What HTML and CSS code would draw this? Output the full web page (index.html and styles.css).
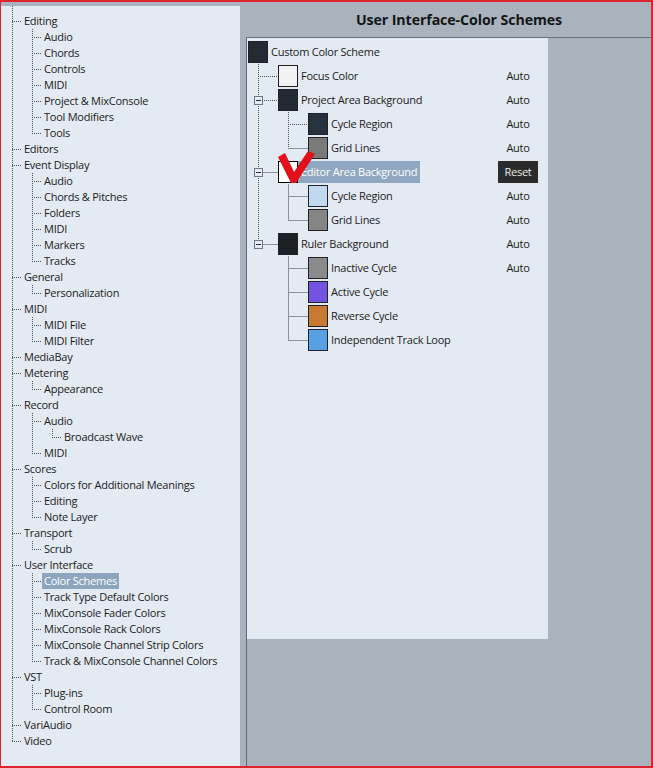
FILE: index.html
```html
<!DOCTYPE html>
<html>
<head>
<meta charset="utf-8">
<link rel="stylesheet" href="styles.css">
</head>
<body>
<div class="frame">
  <div class="left">
    <div class="ltree">
      <div class="lr"><span class="g h"></span><span class="lt">Editing</span></div>
      <div class="lr"><span class="g"></span><span class="g tee"></span><span class="lt">Audio</span></div>
      <div class="lr"><span class="g"></span><span class="g tee"></span><span class="lt">Chords</span></div>
      <div class="lr"><span class="g"></span><span class="g tee"></span><span class="lt">Controls</span></div>
      <div class="lr"><span class="g"></span><span class="g tee"></span><span class="lt">MIDI</span></div>
      <div class="lr"><span class="g"></span><span class="g tee"></span><span class="lt">Project &amp; MixConsole</span></div>
      <div class="lr"><span class="g"></span><span class="g tee"></span><span class="lt">Tool Modifiers</span></div>
      <div class="lr"><span class="g"></span><span class="g ell"></span><span class="lt">Tools</span></div>
      <div class="lr"><span class="g h"></span><span class="lt">Editors</span></div>
      <div class="lr"><span class="g h"></span><span class="lt">Event Display</span></div>
      <div class="lr"><span class="g"></span><span class="g tee"></span><span class="lt">Audio</span></div>
      <div class="lr"><span class="g"></span><span class="g tee"></span><span class="lt">Chords &amp; Pitches</span></div>
      <div class="lr"><span class="g"></span><span class="g tee"></span><span class="lt">Folders</span></div>
      <div class="lr"><span class="g"></span><span class="g tee"></span><span class="lt">MIDI</span></div>
      <div class="lr"><span class="g"></span><span class="g tee"></span><span class="lt">Markers</span></div>
      <div class="lr"><span class="g"></span><span class="g ell"></span><span class="lt">Tracks</span></div>
      <div class="lr"><span class="g h"></span><span class="lt">General</span></div>
      <div class="lr"><span class="g"></span><span class="g ell"></span><span class="lt">Personalization</span></div>
      <div class="lr"><span class="g h"></span><span class="lt">MIDI</span></div>
      <div class="lr"><span class="g"></span><span class="g tee"></span><span class="lt">MIDI File</span></div>
      <div class="lr"><span class="g"></span><span class="g ell"></span><span class="lt">MIDI Filter</span></div>
      <div class="lr"><span class="g h"></span><span class="lt">MediaBay</span></div>
      <div class="lr"><span class="g h"></span><span class="lt">Metering</span></div>
      <div class="lr"><span class="g"></span><span class="g ell"></span><span class="lt">Appearance</span></div>
      <div class="lr"><span class="g h"></span><span class="lt">Record</span></div>
      <div class="lr"><span class="g"></span><span class="g tee"></span><span class="lt">Audio</span></div>
      <div class="lr"><span class="g"></span><span class="g pipe"></span><span class="g ell"></span><span class="lt">Broadcast Wave</span></div>
      <div class="lr"><span class="g"></span><span class="g ell"></span><span class="lt">MIDI</span></div>
      <div class="lr"><span class="g h"></span><span class="lt">Scores</span></div>
      <div class="lr"><span class="g"></span><span class="g tee"></span><span class="lt">Colors for Additional Meanings</span></div>
      <div class="lr"><span class="g"></span><span class="g tee"></span><span class="lt">Editing</span></div>
      <div class="lr"><span class="g"></span><span class="g ell"></span><span class="lt">Note Layer</span></div>
      <div class="lr"><span class="g h"></span><span class="lt">Transport</span></div>
      <div class="lr"><span class="g"></span><span class="g ell"></span><span class="lt">Scrub</span></div>
      <div class="lr"><span class="g h"></span><span class="lt">User Interface</span></div>
      <div class="lr"><span class="g"></span><span class="g tee"></span><span class="lt sel">Color Schemes</span></div>
      <div class="lr"><span class="g"></span><span class="g tee"></span><span class="lt">Track Type Default Colors</span></div>
      <div class="lr"><span class="g"></span><span class="g tee"></span><span class="lt">MixConsole Fader Colors</span></div>
      <div class="lr"><span class="g"></span><span class="g tee"></span><span class="lt">MixConsole Rack Colors</span></div>
      <div class="lr"><span class="g"></span><span class="g tee"></span><span class="lt">MixConsole Channel Strip Colors</span></div>
      <div class="lr"><span class="g"></span><span class="g ell"></span><span class="lt">Track &amp; MixConsole Channel Colors</span></div>
      <div class="lr"><span class="g h"></span><span class="lt">VST</span></div>
      <div class="lr"><span class="g"></span><span class="g tee"></span><span class="lt">Plug-ins</span></div>
      <div class="lr"><span class="g"></span><span class="g ell"></span><span class="lt">Control Room</span></div>
      <div class="lr"><span class="g h"></span><span class="lt">VariAudio</span></div>
      <div class="lr"><span class="g h"></span><span class="lt">Video</span></div>
    </div>
  </div>
  <div class="right">
    <div class="header">User Interface-Color Schemes</div>
    <div class="content">
      <div class="panel">
        <div class="rtree">
          <div class="rr">
            <span class="sw" style="background:#252b33"></span>
            <span class="rl">Custom Color Scheme</span>
          </div>
          <div class="rr">
            <span class="rg tee"></span>
            <span class="sw" style="background:#f2f2f2"></span>
            <span class="rl">Focus Color</span>
            <span class="val">Auto</span>
          </div>
          <div class="rr">
            <span class="rg tee"><span class="box"></span></span>
            <span class="sw" style="background:#242a31"></span>
            <span class="rl">Project Area Background</span>
            <span class="val">Auto</span>
          </div>
          <div class="rr">
            <span class="rg pipe"></span><span class="rg tee"></span>
            <span class="sw" style="background:#26333f"></span>
            <span class="rl">Cycle Region</span>
            <span class="val">Auto</span>
          </div>
          <div class="rr">
            <span class="rg pipe"></span><span class="rg ell solidh"></span>
            <span class="sw" style="background:#7a7a7a"></span>
            <span class="rl">Grid Lines</span>
            <span class="val">Auto</span>
          </div>
          <div class="rr">
            <span class="rg tee solidh"><span class="box"></span></span>
            <span class="sw white" style="background:#ffffff"></span>
            <span class="rl sel">Editor Area Background</span>
            <span class="val btn">Reset</span>
          </div>
          <div class="rr">
            <span class="rg pipe"></span><span class="rg tee solid"></span>
            <span class="sw" style="background:#c1d8f0"></span>
            <span class="rl">Cycle Region</span>
            <span class="val">Auto</span>
          </div>
          <div class="rr">
            <span class="rg pipe"></span><span class="rg ell solid"></span>
            <span class="sw" style="background:#858585"></span>
            <span class="rl">Grid Lines</span>
            <span class="val">Auto</span>
          </div>
          <div class="rr">
            <span class="rg ell solidh"><span class="box"></span></span>
            <span class="sw" style="background:#1b1e22"></span>
            <span class="rl">Ruler Background</span>
            <span class="val">Auto</span>
          </div>
          <div class="rr">
            <span class="rg"></span><span class="rg tee solid"></span>
            <span class="sw" style="background:#888a8c"></span>
            <span class="rl">Inactive Cycle</span>
            <span class="val">Auto</span>
          </div>
          <div class="rr">
            <span class="rg"></span><span class="rg tee solid"></span>
            <span class="sw" style="background:#7353e0"></span>
            <span class="rl">Active Cycle</span>
          </div>
          <div class="rr">
            <span class="rg"></span><span class="rg tee solid"></span>
            <span class="sw" style="background:#c87a34"></span>
            <span class="rl">Reverse Cycle</span>
          </div>
          <div class="rr">
            <span class="rg"></span><span class="rg ell solid"></span>
            <span class="sw" style="background:#58a0e4"></span>
            <span class="rl">Independent Track Loop</span>
          </div>
        </div>
      </div>
    </div>
  </div>
  <svg class="check" width="44" height="40" viewBox="0 0 44 40" xmlns="http://www.w3.org/2000/svg">
    <path d="M3 8 L10 4 L19 23 L33 2 L40 5 L21 34 L16 34 Z" fill="#e3101c"/>
  </svg>
</div>
</body>
</html>
```
FILE: styles.css
```css
* { box-sizing: border-box; }
html, body { margin: 0; padding: 0; }
body {
  font-family: "Open Sans", "Noto Sans", sans-serif;
  font-size: 11px;
  letter-spacing: -0.25px;
  color: #1b1b1b;
  --dc: #46566a;
  --vd: repeating-linear-gradient(to bottom, var(--dc) 0 1px, transparent 1px 2px);
  --hd: repeating-linear-gradient(to right, var(--dc) 0 1px, transparent 1px 2px);
  --sc: #8c9299;
  --vs: linear-gradient(var(--sc), var(--sc));
}
.frame {
  position: relative;
  width: 653px;
  height: 768px;
  border-style: solid;
  border-color: #e0242c;
  border-width: 2px 2px 2px 1px;
  background: #a8b3be;
  display: flex;
  overflow: hidden;
}
.left {
  width: 239px;
  flex: none;
  margin-top: 4px;
  background: #e4eaf2;
}
.ltree {
  padding: 7px 0 0 1px;
  background-image: var(--vd);
  background-repeat: no-repeat;
  background-position: 11px 0;
  background-size: 1px 735px;
}
.lr {
  display: flex;
  height: 16px;
  align-items: center;
  white-space: nowrap;
}
.g {
  width: 20px;
  height: 16px;
  flex: none;
  background-repeat: no-repeat;
}
.g.h {
  background-image: var(--hd);
  background-position: 10px 8px;
  background-size: 10px 1px;
}
.g.tee {
  background-image: var(--hd), var(--vd);
  background-position: 10px 8px, 10px 0;
  background-size: 10px 1px, 1px 16px;
}
.g.ell {
  background-image: var(--hd), var(--vd);
  background-position: 10px 8px, 10px 0;
  background-size: 10px 1px, 1px 9px;
}
.g.pipe {
  background-image: var(--vd);
  background-position: 10px 0;
  background-size: 1px 16px;
}
.lt {
  padding: 0 2px;
  height: 16px;
  line-height: 16px;
}
.lt.sel {
  background: #8ea5be;
  color: #ffffff;
}
.right {
  flex: 1;
  display: flex;
  flex-direction: column;
}
.header {
  height: 35px;
  flex: none;
  display: flex;
  align-items: center;
  justify-content: center;
  padding-left: 27px;
  font-weight: 700;
  font-size: 14.2px;
  letter-spacing: -0.1px;
  color: #151515;
}
.content {
  flex: 1;
  margin-left: 6px;
  border-top: 1px solid #68737f;
  border-left: 1px solid #5e6976;
  background: #a8b3be;
}
.panel {
  width: 301px;
  height: 601px;
  background: #e4eaf2;
  padding: 2px 0 0 1px;
}
.rr {
  display: flex;
  align-items: center;
  height: 24px;
  white-space: nowrap;
}
.rg {
  width: 30px;
  height: 24px;
  flex: none;
  display: flex;
  align-items: flex-start;
  background-repeat: no-repeat;
}
.rg.tee {
  background-image: var(--hd), var(--vd);
  background-position: 10px 12px, 10px 0;
  background-size: 20px 1px, 1px 24px;
}
.rg.ell {
  background-image: var(--hd), var(--vd);
  background-position: 10px 12px, 10px 0;
  background-size: 20px 1px, 1px 13px;
}
.rg.pipe {
  background-image: var(--vd);
  background-position: 10px 0;
  background-size: 1px 24px;
}
.rg.solidh { background-image: var(--vs), var(--vd); }
.rg.solid { background-image: var(--vs), var(--vs); }
.box {
  width: 9px;
  height: 9px;
  margin: 8px 0 0 6px;
  border: 1px solid #6f7782;
  background: linear-gradient(#2a2f36, #2a2f36) 1px 3px / 5px 1px no-repeat, #e4eaf2;
}
.sw {
  width: 20px;
  height: 22px;
  flex: none;
  border: 1px solid #1d2228;
}
.sw.white { border-color: #000; }
.rl {
  flex: 1;
  height: 22px;
  line-height: 22px;
  padding-left: 3px;
}
.rl.sel {
  flex: 0 0 auto;
  margin-right: auto;
  background: #8fa7c0;
  color: #ffffff;
  padding-right: 3px;
}
.val {
  width: 40px;
  height: 22px;
  line-height: 22px;
  text-align: center;
  margin-right: 10px;
  flex: none;
}
.val.btn {
  background: #2b2b2b;
  color: #ececec;
}
.check {
  position: absolute;
  left: 274px;
  top: 147px;
}
```
